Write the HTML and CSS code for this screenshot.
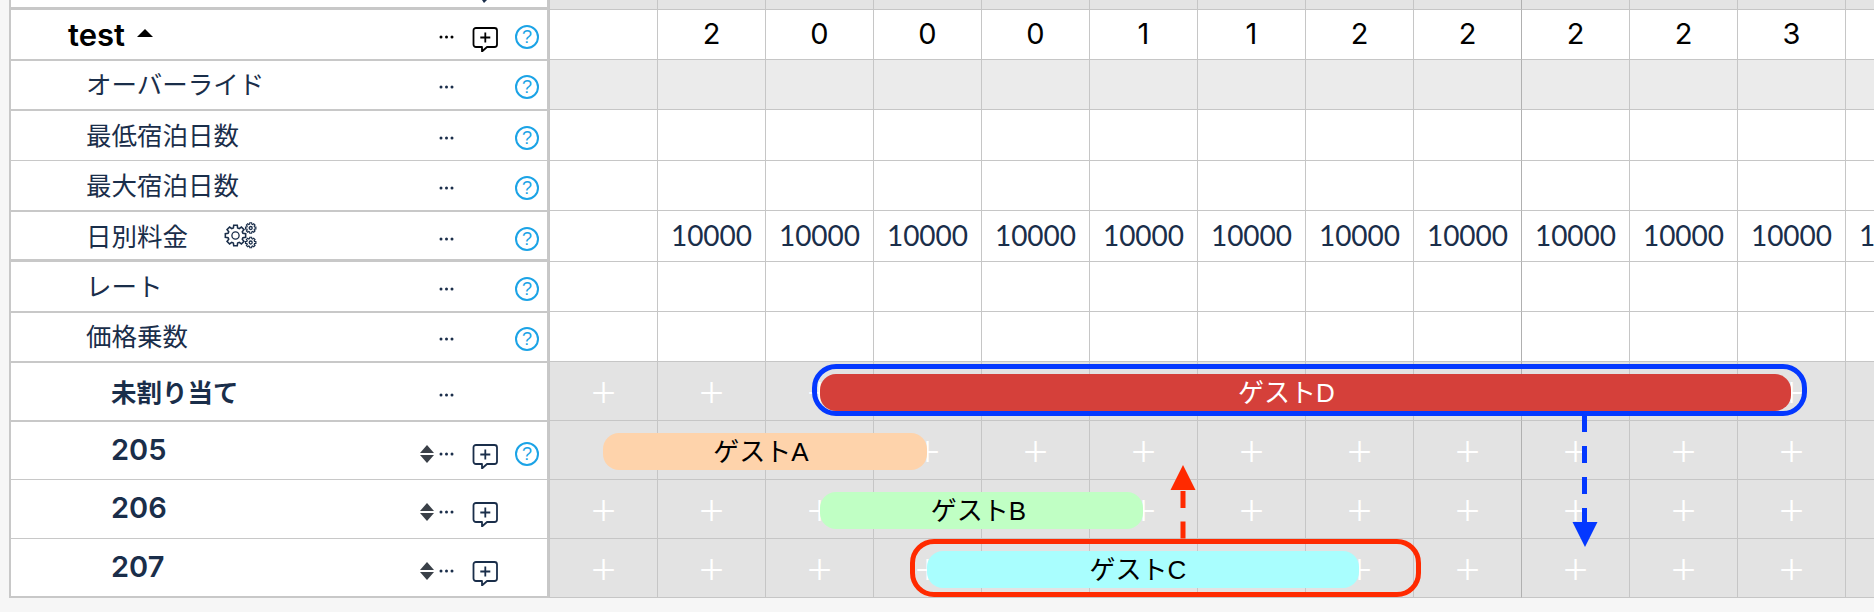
FILE: index.html
```html
<!DOCTYPE html>
<html lang="ja">
<head>
<meta charset="utf-8">
<title>Calendar</title>
<link rel="stylesheet" href="styles.css">
</head>
<body>
<svg class="defs" width="0" height="0" aria-hidden="true">
  <defs>
    <path id="gear" d="M-2.48-8.65L-2.08-11.82L2.08-11.82L2.48-8.65L4.36-7.87L6.88-9.83L9.83-6.88L7.87-4.36L8.65-2.48L11.82-2.08L11.82 2.08L8.65 2.48L7.87 4.36L9.83 6.88L6.88 9.83L4.36 7.87L2.48 8.65L2.08 11.82L-2.08 11.82L-2.48 8.65L-4.36 7.87L-6.88 9.83L-9.83 6.88L-7.87 4.36L-8.65 2.48L-11.82 2.08L-11.82-2.08L-8.65-2.48L-7.87-4.36L-9.83-6.88L-6.88-9.83L-4.36-7.87Z"/>
    <g id="dots"><circle cx="2" cy="3" r="1.5"/><circle cx="7.5" cy="3" r="1.5"/><circle cx="13" cy="3" r="1.5"/></g>
    <g id="note"><path d="M4 6H22.5A2.5 2.5 0 0 1 25 8.500V22.500A2.500 2.500 0 0 1 22.500 25H15L10 29.500V25H4A2.500 2.500 0 0 1 1.500 22.500V8.500A2.500 2.500 0 0 1 4 6Z" fill="none" stroke="currentColor" stroke-width="1.800" stroke-linejoin="round"/><path d="M13.300 10.500V20.500M8.300 15.500H18.300" fill="none" stroke="currentColor" stroke-width="1.800"/></g>
    <g id="updown"><path d="M7 0L14 8H0Z"/><path d="M0 10H14L7 18Z"/></g>
  </defs>
</svg>
<main class="board">
  <div class="row strip">
    <div class="side strip-side"><svg class="tail" width="8" height="3" viewBox="0 0 8 3"><path d="M1 0H6L3 3Z"/></svg></div>
    <div class="cells"><div class="cell"></div><div class="cell"></div><div class="cell"></div><div class="cell"></div><div class="cell"></div><div class="cell"></div><div class="cell"></div><div class="cell"></div><div class="cell"></div><div class="cell"></div><div class="cell"></div><div class="cell"></div><div class="cell"></div></div>
  </div>

  <div class="row h50 top">
    <div class="side lift thick black">
      <div class="label test">test<span class="caret"></span></div>
      <div class="ctrls"><span class="slot-sort"></span><svg class="dots" viewBox="0 0 15 6"><use href="#dots"/></svg><svg class="note" viewBox="0 0 26 30"><use href="#note"/></svg><span class="help">?</span></div>
    </div>
    <div class="cells num"><div class="cell"></div><div class="cell">2</div><div class="cell">0</div><div class="cell">0</div><div class="cell">0</div><div class="cell">1</div><div class="cell">1</div><div class="cell">2</div><div class="cell">2</div><div class="cell">2</div><div class="cell">2</div><div class="cell">3</div><div class="cell"></div></div>
  </div>

  <div class="row h50 over">
    <div class="side lift">
      <div class="label sub">オーバーライド</div>
      <div class="ctrls"><span class="slot-sort"></span><svg class="dots" viewBox="0 0 15 6"><use href="#dots"/></svg><span class="slot-note"></span><span class="help">?</span></div>
    </div>
    <div class="cells"><div class="cell"></div><div class="cell"></div><div class="cell"></div><div class="cell"></div><div class="cell"></div><div class="cell"></div><div class="cell"></div><div class="cell"></div><div class="cell"></div><div class="cell"></div><div class="cell"></div><div class="cell"></div><div class="cell"></div></div>
  </div>

  <div class="row h51">
    <div class="side lift">
      <div class="label sub">最低宿泊日数</div>
      <div class="ctrls"><span class="slot-sort"></span><svg class="dots" viewBox="0 0 15 6"><use href="#dots"/></svg><span class="slot-note"></span><span class="help">?</span></div>
    </div>
    <div class="cells"><div class="cell"></div><div class="cell"></div><div class="cell"></div><div class="cell"></div><div class="cell"></div><div class="cell"></div><div class="cell"></div><div class="cell"></div><div class="cell"></div><div class="cell"></div><div class="cell"></div><div class="cell"></div><div class="cell"></div></div>
  </div>

  <div class="row h50">
    <div class="side lift thin">
      <div class="label sub">最大宿泊日数</div>
      <div class="ctrls"><span class="slot-sort"></span><svg class="dots" viewBox="0 0 15 6"><use href="#dots"/></svg><span class="slot-note"></span><span class="help">?</span></div>
    </div>
    <div class="cells"><div class="cell"></div><div class="cell"></div><div class="cell"></div><div class="cell"></div><div class="cell"></div><div class="cell"></div><div class="cell"></div><div class="cell"></div><div class="cell"></div><div class="cell"></div><div class="cell"></div><div class="cell"></div><div class="cell"></div></div>
  </div>

  <div class="row h51">
    <div class="side lift">
      <div class="label sub">日別料金<svg class="gears" viewBox="0 0 32 24"><use class="gear-big" href="#gear" transform="translate(10.500 12.500) scale(.86)"/><circle cx="10.500" cy="12.500" r="3.600"/><use href="#gear" transform="translate(25.700 5) scale(.44)"/><circle cx="25.700" cy="5" r="1.500"/><use href="#gear" transform="translate(25.700 19.500) scale(.44)"/><circle cx="25.700" cy="19.500" r="1.500"/></svg></div>
      <div class="ctrls"><span class="slot-sort"></span><svg class="dots" viewBox="0 0 15 6"><use href="#dots"/></svg><span class="slot-note"></span><span class="help">?</span></div>
    </div>
    <div class="cells price"><div class="cell"></div><div class="cell">10000</div><div class="cell">10000</div><div class="cell">10000</div><div class="cell">10000</div><div class="cell">10000</div><div class="cell">10000</div><div class="cell">10000</div><div class="cell">10000</div><div class="cell">10000</div><div class="cell">10000</div><div class="cell">10000</div><div class="cell">10000</div></div>
  </div>

  <div class="row h50">
    <div class="side lift thick">
      <div class="label sub">レート</div>
      <div class="ctrls"><span class="slot-sort"></span><svg class="dots" viewBox="0 0 15 6"><use href="#dots"/></svg><span class="slot-note"></span><span class="help">?</span></div>
    </div>
    <div class="cells"><div class="cell"></div><div class="cell"></div><div class="cell"></div><div class="cell"></div><div class="cell"></div><div class="cell"></div><div class="cell"></div><div class="cell"></div><div class="cell"></div><div class="cell"></div><div class="cell"></div><div class="cell"></div><div class="cell"></div></div>
  </div>

  <div class="row h50">
    <div class="side lift">
      <div class="label sub">価格乗数</div>
      <div class="ctrls"><span class="slot-sort"></span><svg class="dots" viewBox="0 0 15 6"><use href="#dots"/></svg><span class="slot-note"></span><span class="help">?</span></div>
    </div>
    <div class="cells"><div class="cell"></div><div class="cell"></div><div class="cell"></div><div class="cell"></div><div class="cell"></div><div class="cell"></div><div class="cell"></div><div class="cell"></div><div class="cell"></div><div class="cell"></div><div class="cell"></div><div class="cell"></div><div class="cell"></div></div>
  </div>

  <div class="row h59 track">
    <div class="side room-side">
      <div class="label room kanji">未割り当て</div>
      <div class="ctrls"><span class="slot-sort"></span><svg class="dots" viewBox="0 0 15 6"><use href="#dots"/></svg><span class="slot-note"></span><span class="slot-help"></span></div>
    </div>
    <div class="cells"><div class="cell">+</div><div class="cell">+</div><div class="cell">+</div><div class="cell">+</div><div class="cell">+</div><div class="cell">+</div><div class="cell">+</div><div class="cell">+</div><div class="cell">+</div><div class="cell">+</div><div class="cell">+</div><div class="cell">+</div><div class="cell"></div></div>
  </div>

  <div class="row h59 track">
    <div class="side room-side">
      <div class="label room">205</div>
      <div class="ctrls"><svg class="sort" viewBox="0 0 14 18"><use href="#updown"/></svg><svg class="dots" viewBox="0 0 15 6"><use href="#dots"/></svg><svg class="note" viewBox="0 0 26 30"><use href="#note"/></svg><span class="help">?</span></div>
    </div>
    <div class="cells"><div class="cell"></div><div class="cell">+</div><div class="cell">+</div><div class="cell">+</div><div class="cell">+</div><div class="cell">+</div><div class="cell">+</div><div class="cell">+</div><div class="cell">+</div><div class="cell">+</div><div class="cell">+</div><div class="cell">+</div><div class="cell"></div></div>
  </div>

  <div class="row h59 track">
    <div class="side room-side thin">
      <div class="label room">206</div>
      <div class="ctrls"><svg class="sort" viewBox="0 0 14 18"><use href="#updown"/></svg><svg class="dots" viewBox="0 0 15 6"><use href="#dots"/></svg><svg class="note" viewBox="0 0 26 30"><use href="#note"/></svg><span class="slot-help"></span></div>
    </div>
    <div class="cells"><div class="cell">+</div><div class="cell">+</div><div class="cell">+</div><div class="cell">+</div><div class="cell">+</div><div class="cell">+</div><div class="cell">+</div><div class="cell">+</div><div class="cell">+</div><div class="cell">+</div><div class="cell">+</div><div class="cell">+</div><div class="cell"></div></div>
  </div>

  <div class="row h60 track last">
    <div class="side room-side thin end">
      <div class="label room">207</div>
      <div class="ctrls"><svg class="sort" viewBox="0 0 14 18"><use href="#updown"/></svg><svg class="dots" viewBox="0 0 15 6"><use href="#dots"/></svg><svg class="note" viewBox="0 0 26 30"><use href="#note"/></svg><span class="slot-help"></span></div>
    </div>
    <div class="cells"><div class="cell">+</div><div class="cell">+</div><div class="cell">+</div><div class="cell">+</div><div class="cell">+</div><div class="cell">+</div><div class="cell">+</div><div class="cell">+</div><div class="cell">+</div><div class="cell">+</div><div class="cell">+</div><div class="cell">+</div><div class="cell"></div></div>
  </div>

  <div class="bar bar-d">ゲストD</div>
  <div class="bar bar-a">ゲストA</div>
  <div class="bar bar-b">ゲストB</div>
  <div class="bar bar-c">ゲストC</div>
  <div class="ring ring-blue"></div>
  <div class="ring ring-red"></div>
  <svg class="arrow arrow-red" viewBox="0 0 26 74"><path d="M13 0L25.500 25H.5Z"/><rect x="10.500" y="26" width="5" height="17"/><rect x="10.500" y="56.500" width="5" height="17"/></svg>
  <svg class="arrow arrow-blue" viewBox="0 0 26 131"><rect x="10" y="0" width="5" height="16"/><rect x="10" y="30" width="5" height="17"/><rect x="10" y="61" width="5" height="17"/><rect x="10" y="92" width="5" height="15"/><path d="M.5 106H25.500L13 131Z"/></svg>
</main>
</body>
</html>
```

FILE: styles.css
```css
* { box-sizing: border-box; }

html, body {
  margin: 0;
  padding: 0;
  background: #f6f6f6;
}

body {
  width: 1874px;
  height: 612px;
  overflow: hidden;
  font-family: "Liberation Sans", "Noto Sans CJK JP", sans-serif;
  color: #1a2e4a;
}

.defs { position: absolute; }

.board {
  position: relative;
  width: 1874px;
  padding-left: 9px;
  overflow: hidden;
}

.row { display: flex; }
.strip { height: 9px; }
.h50 { height: 50px; }
.h51 { height: 51px; }
.h59 { height: 59px; }
.h60 { height: 60px; }

.side {
  flex: 0 0 540px;
  display: flex;
  align-items: center;
  position: relative;
  z-index: 1;
  background: #fff;
  border-left: 2px solid #c8c8c8;
  border-right: 2px solid #c8c8c8;
  border-top: 2px solid #c8c8c8;
}

.strip-side {
  border-top: 0;
  padding-left: 470px;
  align-items: flex-start;
}
.tail { fill: #1a2e4a; }

.thick { border-top-width: 3px; margin-top: -2px; }
.thin { border-top-width: 1px; }
.end { border-bottom: 3px solid #c8c8c8; margin-bottom: -1px; }

.label {
  flex: 1;
  display: flex;
  align-items: center;
  white-space: nowrap;
}

.lift .ctrls { margin-top: 4px; }
.room-side .label { margin-bottom: 3px; }
.room-side .ctrls { margin-top: 6px; }

.test {
  padding-left: 57px;
  font-family: Inter, "Liberation Sans", sans-serif;
  font-size: 31px;
  font-weight: 600;
  color: #000;
}

.caret {
  width: 0;
  height: 0;
  margin: -3px 0 0 12px;
  border-left: 8px solid transparent;
  border-right: 8px solid transparent;
  border-bottom: 8px solid #000;
}

.sub {
  margin-bottom: 5px;
  padding-left: 75px;
  font-size: 25.500px;
  font-weight: 400;
}

.room {
  padding-left: 100px;
  font-family: Inter, "Liberation Sans", sans-serif;
  font-size: 29px;
  font-weight: 600;
}

.kanji {
  font-family: "Noto Sans CJK JP", sans-serif;
  font-size: 25.500px;
  font-weight: 700;
}

.gears {
  width: 32px;
  height: 24px;
  margin: 2px 0 0 37px;
  fill: #fff;
  stroke: #1a2e4a;
  stroke-width: 1.300;
  overflow: visible;
}
.gears use { stroke-width: 2.600; }
.gears .gear-big { stroke-width: 1.800; }

.ctrls {
  flex: none;
  display: flex;
  align-items: center;
  padding-right: 8px;
}

.slot-sort, .sort {
  flex: none;
  width: 14px;
  height: 18px;
  fill: #3a4048;
}

.dots {
  flex: none;
  width: 15px;
  height: 6px;
  margin-left: 5px;
  fill: #1a2e4a;
}

.slot-note, .note {
  flex: none;
  width: 26px;
  height: 30px;
  margin-left: 18px;
  color: #1a2e4a;
}

.black .dots { fill: #000; }
.black .note { color: #000; }

.slot-help, .help {
  flex: none;
  width: 24px;
  height: 24px;
  margin-left: 17px;
}

.help {
  display: flex;
  align-items: center;
  justify-content: center;
  border: 2px solid #1ba3e6;
  border-radius: 50%;
  font-size: 18px;
  line-height: 1;
  color: #1ba3e6;
}

.cells {
  flex: none;
  display: flex;
  width: 1325px;
}

.cell {
  flex: 0 0 108px;
  display: flex;
  align-items: center;
  justify-content: center;
  background: #fff;
  border-left: 1px solid #c6c6c6;
  border-top: 1px solid #c6c6c6;
  white-space: nowrap;
}
.cell:nth-child(10) { border-left-color: #b0b0b0; }

.strip .cell { background: #e4e4e4; border-top: 0; }
.over .cell { background: #ebebeb; }

.num .cell {
  padding-bottom: 3px;
  font-family: Inter, "Liberation Sans", sans-serif;
  font-size: 29px;
  font-weight: 400;
  color: #000;
}

.price .cell {
  padding-bottom: 2px;
  font-family: Lato, "Liberation Sans", sans-serif;
  font-size: 28px;
  font-weight: 400;
}

.track .cell {
  background: #e3e3e3;
  font-family: "Noto Sans", "Liberation Sans", sans-serif;
  font-size: 44px;
  line-height: 1;
  font-weight: 300;
  color: #fff;
}
.last .cell { border-bottom: 1px solid #c6c6c6; }

.bar {
  position: absolute;
  z-index: 2;
  display: flex;
  align-items: center;
  justify-content: center;
  height: 37px;
  padding-bottom: 4px;
  border-radius: 16px;
  font-size: 26px;
  font-weight: 400;
  color: #000;
}

.bar-d { left: 820px; top: 374px; width: 971px; padding-right: 38px; background: #d5403a; color: #fff; }
.bar-a { left: 603px; top: 433px; width: 324px; padding-right: 8px; background: #fed3ab; }
.bar-b { left: 820px; top: 492px; width: 323px; padding-right: 6px; background: #c0ffc4; }
.bar-c { left: 927px; top: 551px; width: 432px; padding-right: 10px; background: #a9fefe; }

.ring {
  position: absolute;
  z-index: 3;
  border-style: solid;
  border-width: 5px;
  border-radius: 24px;
}
.ring-blue { left: 812px; top: 364px; width: 995px; height: 52px; border-color: #0438ff; }
.ring-red { left: 910px; top: 539px; width: 511px; height: 58px; border-color: #ff2a00; }

.arrow { position: absolute; z-index: 3; width: 26px; }
.arrow-red { left: 1170px; top: 465px; height: 74px; fill: #ff2a00; }
.arrow-blue { left: 1572px; top: 416px; height: 131px; fill: #0438ff; }
```
